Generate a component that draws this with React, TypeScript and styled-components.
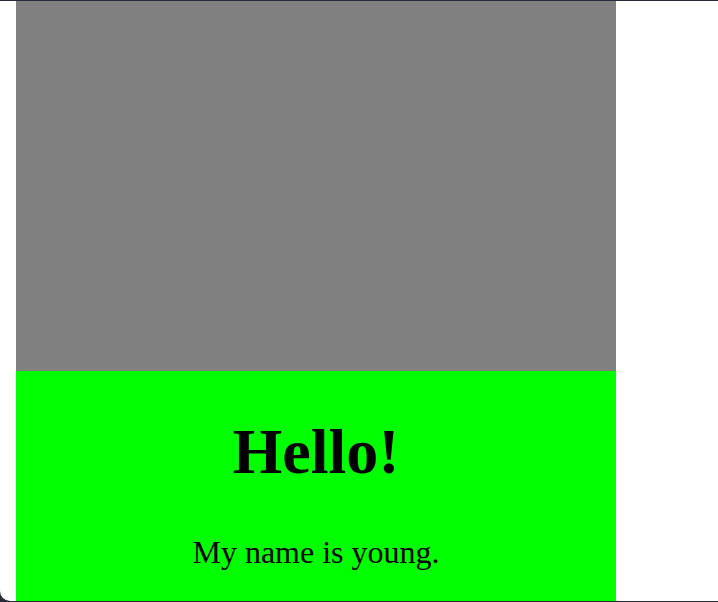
import React from "react";
import styled, { createGlobalStyle } from "styled-components";

const Global = createGlobalStyle`
  html, body {
    margin: 0;
    padding: 0;
    background: #2a2b38;
    overflow: hidden;
  }
  body {
    font-family: "Liberation Serif", "Times New Roman", serif;
  }
`;

const Frame = styled.div`
  margin-top: 1px;
  width: 718px;
  height: 600px;
  background: #ffffff;
  border-bottom-left-radius: 10px;
  overflow: hidden;
  padding-left: 16px;
  box-sizing: border-box;
`;

const Column = styled.div`
  width: 600px;
  display: flex;
  flex-direction: column;
`;

const GrayBox = styled.div`
  height: 370px;
  background: #808080;
`;

const GreenBox = styled.section`
  height: 230px;
  background: #00ff00;
  text-align: center;
  display: flow-root;
  color: #000;
`;

const Title = styled.h1`
  font-size: 64px;
  font-weight: bold;
  margin: 44px 0 0;
`;

const Text = styled.p`
  font-size: 32px;
  margin: 45px 0 0;
`;

export default function App() {
  return (
    <>
      <Global />
      <Frame>
        <Column>
          <GrayBox />
          <GreenBox>
            <Title>Hello!</Title>
            <Text>My name is young.</Text>
          </GreenBox>
        </Column>
      </Frame>
    </>
  );
}
